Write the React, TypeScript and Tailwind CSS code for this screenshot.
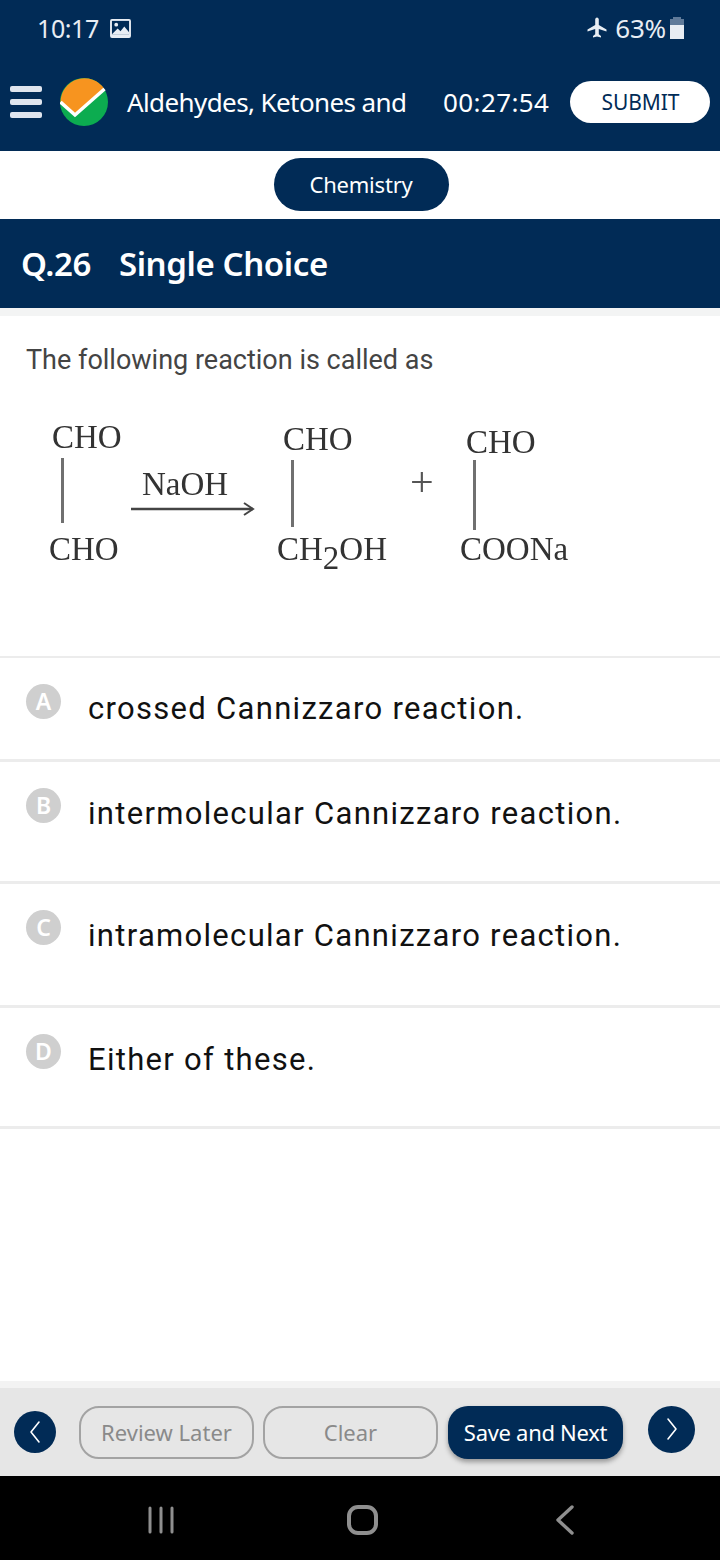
import { ReactNode } from "react";

const sans = "font-['Noto_Sans',sans-serif]";

const options = [
  { letter: "A", text: "crossed Cannizzaro reaction.", h: "h-[104px]", textTop: "pt-[33px]" },
  { letter: "B", text: "intermolecular Cannizzaro reaction.", h: "h-[122px]", textTop: "pt-[34px]" },
  { letter: "C", text: "intramolecular Cannizzaro reaction.", h: "h-[124px]", textTop: "pt-[34px]" },
  { letter: "D", text: "Either of these.", h: "h-[121px]", textTop: "pt-[34px]" },
];

// the reaction is a picture in the question, so its labels sit at fixed places
const Chem = ({ x, y, children }: { x: number; y: number; children: ReactNode }) => (
  <span className="absolute whitespace-nowrap font-['Liberation_Serif',serif] text-[33px] leading-[36px] text-[#333] blur-[0.4px]" style={{ left: x, top: y }}>
    {children}
  </span>
);

const Bond = ({ x, y, h }: { x: number; y: number; h: number }) => (
  <span className="absolute w-[3px] bg-[#707070]" style={{ left: x, top: y, height: h }} />
);

const Reaction = () => (
  <div className="relative h-[180px]">
    <Chem x={52} y={9}>CHO</Chem>
    <Bond x={61} y={48} h={65} />
    <Chem x={49} y={121}>CHO</Chem>
    <Chem x={142} y={56}>NaOH</Chem>
    <svg className="absolute left-[129px] top-[88px] blur-[0.3px]" width="130" height="22" viewBox="0 0 130 22" fill="none" stroke="#444">
      <path d="M2 11H124" strokeWidth="2.4" />
      <path d="M115 5L124 11L115 17" strokeWidth="2" />
    </svg>
    <Chem x={283} y={11}>CHO</Chem>
    <Bond x={291} y={50} h={67} />
    <Chem x={277} y={121}>
      CH<span className="relative top-[9px]">2</span>OH
    </Chem>
    <Chem x={410} y={54}>
      <span className="text-[42px] text-[#555]">+</span>
    </Chem>
    <Chem x={466} y={14}>CHO</Chem>
    <Bond x={473} y={50} h={70} />
    <Chem x={460} y={121}>COONa</Chem>
  </div>
);

const Round = ({ dir, size }: { dir: "l" | "r"; size: string }) => (
  <div className={`flex shrink-0 items-center justify-center rounded-full bg-[#012b56] ${size}`}>
    <svg width="16" height="26" viewBox="0 0 16 26" fill="none" stroke="white" strokeWidth="1.6" strokeLinecap="round" strokeLinejoin="round">
      {dir === "l" ? <path d="M12 3L4 13L12 23" /> : <path d="M4 3L12 13L4 23" />}
    </svg>
  </div>
);

const App = () => {
  return (
    <div className={`flex h-[1560px] w-[720px] flex-col overflow-hidden bg-white ${sans}`}>
      <div className="h-[151px] shrink-0 bg-[#012b56] text-white">
        <div className="flex h-[55px] items-center justify-between pl-[37px] pr-[36px] pt-[1px]">
          <div className="flex items-center gap-[11px] text-[#e8edf3]">
            <span className="text-[25px] leading-none tracking-[-0.4px]">10:17</span>
            <svg width="21" height="19" viewBox="0 0 22 20">
              <rect width="22" height="20" rx="2" fill="#e8edf3" />
              <rect x="2" y="2" width="18" height="14" fill="#012b56" />
              <circle cx="6.5" cy="6" r="2" fill="#e8edf3" />
              <path d="M2 16L8 10L11 13L15 8L20 14V16Z" fill="#e8edf3" />
            </svg>
          </div>
          <div className="flex items-center text-[#e8edf3]">
            <svg width="24" height="24" viewBox="0 0 24 24" fill="#e8edf3" className="mr-[6px]">
              <path d="M21.5 15.5v-2L13.8 9V3.6c0-1-.8-2.1-1.8-2.1s-1.8 1.1-1.8 2.1V9L2.5 13.5v2l7.7-2.4v5.2l-2.2 1.6v1.6l4-1.1 4 1.1v-1.6l-2.2-1.6v-5.2z" />
            </svg>
            <span className="text-[26px] leading-none tracking-[-0.2px]">63%</span>
            <div className="ml-[4px] flex h-[22px] w-[14px] flex-col">
              <div className="mx-auto h-[2px] w-[8px] bg-[#5f7a99]" />
              <div className="h-[6px] bg-[#5f7a99]" />
              <div className="flex-1 bg-[#e8edf3]" />
            </div>
          </div>
        </div>
        <div className="flex h-[96px] items-center pb-[2px] pl-[10px]">
          <div className="flex w-[32px] shrink-0 flex-col gap-[7px]">
            <div className="h-[6px] rounded-[2px] bg-[#dfe5ee]" />
            <div className="h-[6px] rounded-[2px] bg-[#dfe5ee]" />
            <div className="h-[6px] rounded-[2px] bg-[#dfe5ee]" />
          </div>
          <svg className="ml-[18px] shrink-0" width="48" height="48" viewBox="0 0 48 48">
            <circle cx="24" cy="24" r="24" fill="#0cac50" />
            <path d="M0.5 24L15 37L44.5 11A24 24 0 0 0 0.5 24Z" fill="#f7941f" />
            <path d="M0.5 24L15 37L44.5 11" fill="none" stroke="white" strokeWidth="3.5" />
          </svg>
          <span className="ml-[19px] w-[288px] shrink-0 whitespace-nowrap text-[26px] leading-none tracking-[-0.6px]">Aldehydes, Ketones and</span>
          <span className="ml-[28px] shrink-0 text-[26px] leading-none tracking-[0.4px]">00:27:54</span>
          <div className="ml-[21px] flex h-[42px] w-[140px] shrink-0 items-center justify-center rounded-full bg-white pt-[2px] text-[21px] tracking-[-0.1px] text-[#012b56]">SUBMIT</div>
        </div>
      </div>

      <div className="flex h-[68px] shrink-0 justify-center pl-[2px] pt-[7px]">
        <div className="flex h-[53px] w-[175px] items-center justify-center rounded-full bg-[#012b56] text-[22px] tracking-[-0.2px] text-white">Chemistry</div>
      </div>

      <div className="flex h-[89px] shrink-0 items-center gap-[28px] bg-[#012b56] pl-[21px] text-[33px] font-semibold tracking-[-0.4px] text-white">
        <span>Q.26</span>
        <span>Single Choice</span>
      </div>
      <div className="h-[8px] shrink-0 bg-[#f3f4f4]" />

      <div className="h-[342px] shrink-0 border-b-[2px] border-[#ececec]">
        <p className="pl-[26px] pt-[27px] font-['Roboto',sans-serif] text-[27px] leading-[34px] text-[#444]">The following reaction is called as</p>
        <div className="mt-[33px]">
          <Reaction />
        </div>
      </div>

      {options.map((o) => (
        <div key={o.letter} className={`flex shrink-0 border-b-[3px] border-[#ececec] pl-[26px] last:border-b-2 ${o.h}`}>
          <div className="pt-[26px]">
            <div className="flex h-[35px] w-[35px] items-center justify-center rounded-full bg-[#cfcfcf] text-[23px] font-semibold leading-none text-white">{o.letter}</div>
          </div>
          <div className={`ml-[27px] font-['Roboto',sans-serif] text-[31px] leading-[36px] tracking-[1.3px] text-[#111] ${o.textTop}`}>{o.text}</div>
        </div>
      ))}

      <div className="flex-1" />
      <div className="h-[7px] shrink-0 bg-[#f3f3f3]" />
      <div className="flex h-[88px] shrink-0 items-center bg-[#e6e6e6] pl-[14px]">
        <div className="flex w-[42px] justify-center pb-[1px]">
          <Round dir="l" size="h-[42px] w-[42px]" />
        </div>
        <div className="ml-[23px] flex h-[53px] w-[175px] items-center justify-center rounded-[20px] border-2 border-[#a3a3a3] text-[22px] text-[#8a8a8a]">Review Later</div>
        <div className="ml-[9px] flex h-[53px] w-[175px] items-center justify-center rounded-[20px] border-2 border-[#a3a3a3] text-[22px] text-[#8a8a8a]">Clear</div>
        <div className="ml-[10px] flex h-[53px] w-[175px] items-center justify-center rounded-[20px] bg-[#012b56] text-[22px] tracking-[-0.3px] text-white shadow-[0_3px_5px_rgba(0,0,0,0.35)]">Save and Next</div>
        <div className="ml-[25px] pb-[6px]">
          <Round dir="r" size="h-[47px] w-[47px]" />
        </div>
      </div>

      <div className="flex h-[84px] shrink-0 items-center bg-black pt-[4px]">
        <svg className="ml-[148px]" width="28" height="28" viewBox="0 0 28 28" fill="none" stroke="#8f8f8f" strokeWidth="3" strokeLinecap="round">
          <path d="M2 2V26M13 2V26M24 2V26" />
        </svg>
        <svg className="ml-[171px]" width="32" height="32" viewBox="0 0 32 32" fill="none" stroke="#8f8f8f" strokeWidth="4">
          <rect x="2" y="3" width="27" height="26" rx="9" />
        </svg>
        <svg className="ml-[176px]" width="20" height="30" viewBox="0 0 20 30" fill="none" stroke="#8f8f8f" strokeWidth="3.4" strokeLinecap="round" strokeLinejoin="round">
          <path d="M17 2L3 15L17 28" />
        </svg>
      </div>
    </div>
  );
};

export default App;
